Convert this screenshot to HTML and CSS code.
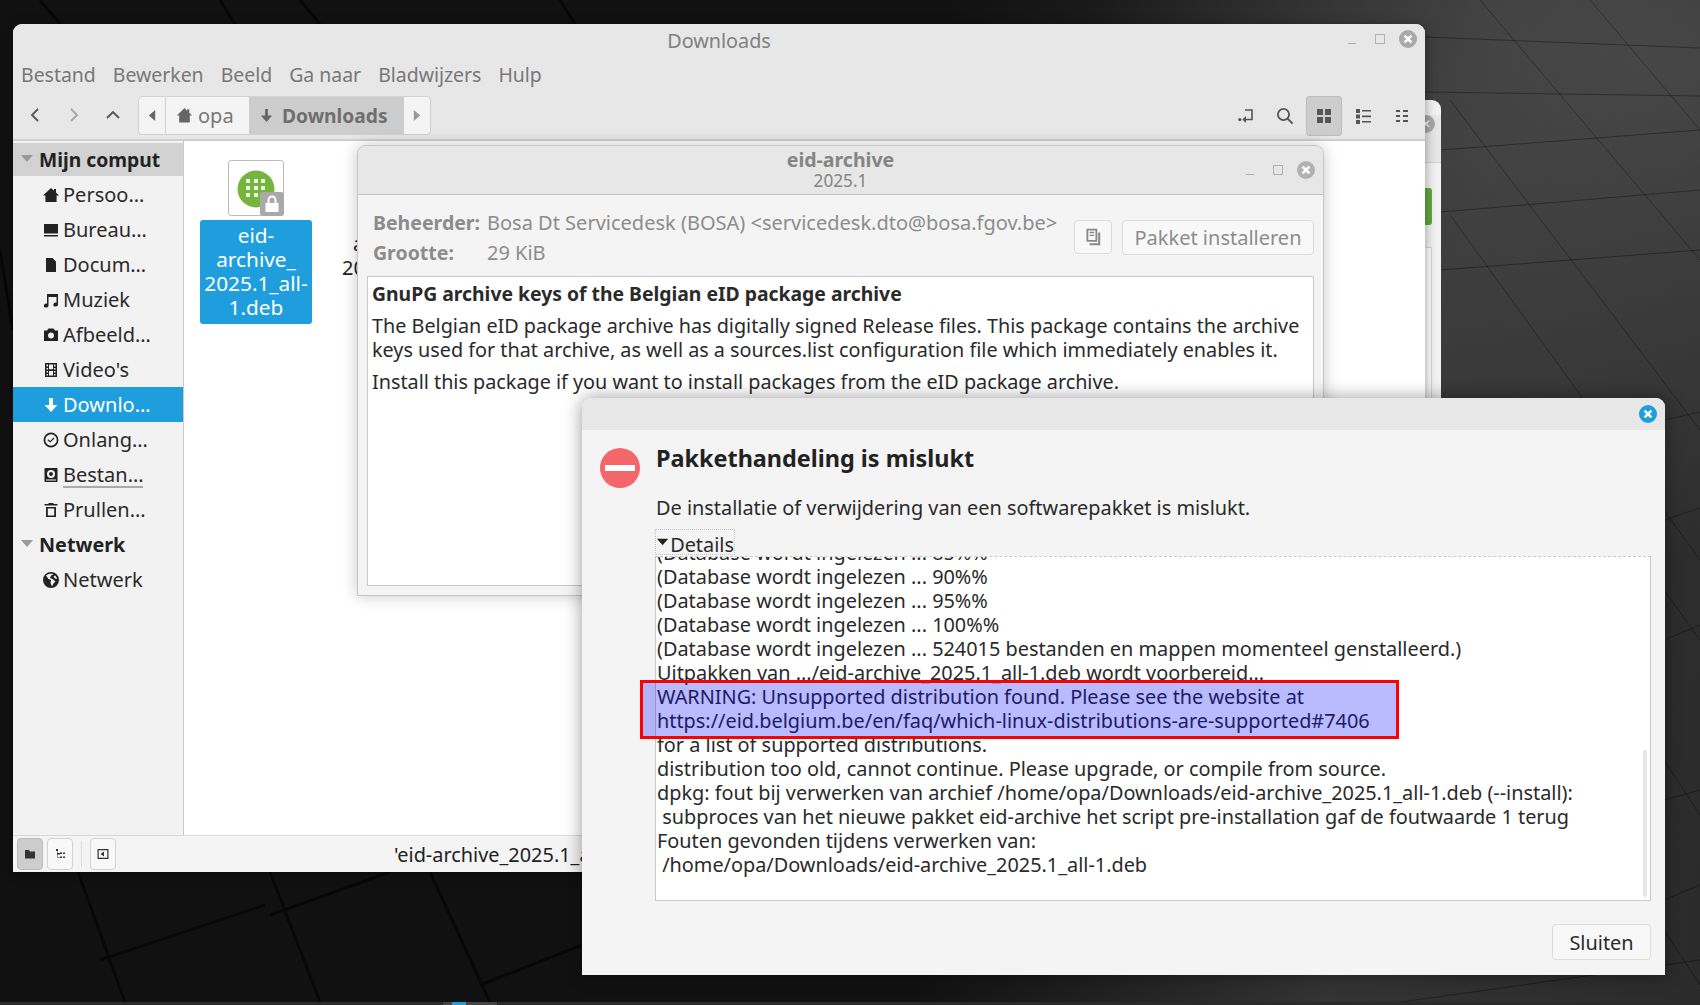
FILE: index.html
```html
<!DOCTYPE html>
<html lang="nl">
<head>
<meta charset="utf-8">
<title>Downloads</title>
<link rel="stylesheet" href="styles.css">
</head>
<body>
<div class="desktop">
  <svg class="wallpaper" viewBox="0 0 1700 1005" width="1700" height="1005">
    <g fill="none" stroke="#000" stroke-opacity=".35">
      <path d="M1425 37 1700 48M1425 92 1700 96M1441 150 1700 130M1441 212 1700 190M1441 270 1700 250M1664 420 1700 412M1664 520 1700 508M1664 640 1700 625M1664 800 1700 790M1664 900 1700 885M1380 1005 1700 960"/>
      <path d="M1480 0 1700 260M1590 0 1700 130M1450 100 1700 430M1450 215 1700 560M1664 590 1700 640M1664 760 1700 815M1664 930 1700 985"/>
    </g>
    <g fill="none" stroke="#000" stroke-opacity=".55" stroke-width="3">
      <path d="M40 0 60 24M220 0 235 24M300 0 320 24M560 0 575 24M0 250 13 330M78 872 125 1002M270 872 320 1002M430 872 490 1002M100 960 265 905M270 915 390 872M480 985 582 945"/>
    </g>
    <rect class="panel" x="0" y="1002" width="1700" height="3"/>
    <rect x="443" y="1002" width="54" height="3" fill="#444"/>
    <rect x="452" y="1002" width="14" height="3" fill="#1f9ede"/>
  </svg>

  <section class="window backwin">
    <div class="backtitle"><span class="backclose">✕</span></div>
    <div class="backbody"><span class="backgreen"></span><span class="backbox"></span></div>
  </section>

  <section class="window mainwin">
    <header class="titlebar">
      <span class="title">Downloads</span>
      <div class="winctl">
        <span class="ctl-min"></span><span class="ctl-max"></span>
        <span class="ctl-close"><svg viewBox="0 0 18 18" width="18" height="18"><circle cx="9" cy="9" r="9" fill="#a9a9a9"/><path d="M5.6 5.6 12.400 12.400M12.400 5.6 5.6 12.400" stroke="#fff" stroke-width="2.6"/></svg></span>
      </div>
    </header>
    <nav class="menubar">
      <span>Bestand</span><span>Bewerken</span><span>Beeld</span><span>Ga naar</span><span>Bladwijzers</span><span>Hulp</span>
    </nav>
    <div class="toolbar">
      <div class="navbtns">
        <svg viewBox="0 0 16 16" width="16" height="16" class="nav"><path d="M11 2 5 8l6 6" fill="none" stroke="#555" stroke-width="1.8"/></svg>
        <svg viewBox="0 0 16 16" width="16" height="16" class="nav"><path d="M5 2l6 6-6 6" fill="none" stroke="#a5a5a5" stroke-width="1.8"/></svg>
        <svg viewBox="0 0 16 16" width="16" height="16" class="nav"><path d="M2 11l6-6 6 6" fill="none" stroke="#555" stroke-width="1.8"/></svg>
      </div>
      <div class="pathbar">
        <span class="pb-arrow"><svg viewBox="0 0 10 14" width="8" height="13"><path d="M9 0v14L1 7z" fill="#666"/></svg></span>
        <span class="pb-item"><svg viewBox="0 0 16 16" width="17" height="17"><path d="M8 1 .8 8H3v6.500h10V8h2.200L12.500 5.400V2h-2v1.500z" fill="#666"/></svg>opa</span>
        <span class="pb-item pb-active"><svg viewBox="0 0 16 16" width="15" height="15"><path d="M6.500 1h3v7H14l-6 7-6-7h4.500z" fill="#666"/></svg>Downloads</span>
        <span class="pb-arrow pb-right"><svg viewBox="0 0 10 14" width="8" height="13"><path d="M1 0v14l8-7z" fill="#999"/></svg></span>
      </div>
      <div class="tools">
        <span class="tool"><svg viewBox="0 0 16 16" width="16" height="16"><path d="M7 2h7v9.500H5" fill="none" stroke="#555" stroke-width="1.6"/><path d="M8 8v7l-3.600-3.500z" fill="#555"/><circle cx="1.8" cy="11.6" r="1.6" fill="#555"/></svg></span>
        <span class="tool"><svg viewBox="0 0 18 18" width="18" height="18"><circle cx="7.5" cy="7.5" r="5.6" fill="none" stroke="#555" stroke-width="1.8"/><path d="M11.6 11.6 16.600 16.600" stroke="#555" stroke-width="2"/></svg></span>
        <span class="tool tool-on"><svg viewBox="0 0 16 16" width="16" height="16"><path d="M1 1h6v6H1zM9 1h6v6H9zM1 9h6v6H1zM9 9h6v6H9z" fill="#555"/></svg></span>
        <span class="tool"><svg viewBox="0 0 16 16" width="16" height="16"><path d="M1 1h4v4H1zM1 6.500h4v4H1zM1 12h4v4H1zM7 2h9v1.600H7zM7 7.600h9v1.600H7zM7 13h9v1.600H7z" fill="#555"/></svg></span>
        <span class="tool"><svg viewBox="0 0 16 16" width="16" height="16"><path d="M2 2h4v2H2zM9 2h5v2H9zM2 7h4v2H2zM9 7h5v2H9zM2 12h4v2H2zM9 12h5v2H9z" fill="#555"/></svg></span>
      </div>
    </div>
    <div class="mainbody">
      <aside class="sidebar">
        <div class="side-head"><svg class="tri" viewBox="0 0 12 7" width="12" height="7"><path d="M0 0h12L6 7z"/></svg>Mijn comput</div>
        <div class="side-row"><svg viewBox="0 0 16 16" width="16" height="16"><path d="M8 1 0 8.500h2.400V15h11.200V8.500H16L13 5.500V2h-2v1.700z"/></svg>Persoo…</div>
        <div class="side-row"><svg viewBox="0 0 16 16" width="16" height="16"><path d="M1 2h14v9.500H1zM1 13h14v1.500H1z"/></svg>Bureau…</div>
        <div class="side-row"><svg viewBox="0 0 16 16" width="16" height="16"><path d="M3 1h6.500L13 4.500V15H3z"/></svg>Docum…</div>
        <div class="side-row"><svg viewBox="0 0 16 16" width="16" height="16"><path d="M4 2h11v10.500a2.300 2 0 1 1-1.500-1.800V5H5.500v8.500A2.300 2 0 1 1 4 11.700z"/></svg>Muziek</div>
        <div class="side-row"><svg viewBox="0 0 16 16" width="16" height="16"><path fill-rule="evenodd" d="M1 3.500h3L5.500 1.500h5L12 3.500h3V14H1zM8 5.500a3 3 0 1 0 0 6 3 3 0 0 0 0-6z"/></svg>Afbeeld…</div>
        <div class="side-row"><svg viewBox="0 0 16 16" width="16" height="16"><path fill-rule="evenodd" d="M2 1h12v14H2zM3.500 2.500v2h1.500v-2zM3.500 6v1.500h1.500V6zM3.500 9v1.500h1.500V9zM3.500 12v1.500h1.500V12zM11 2.500v2h1.500v-2zM11 6v1.500h1.500V6zM11 9v1.500h1.500V9zM11 12v1.500h1.500V12zM6 2.500v4.800h4V2.500zM6 9v4.500h4V9z"/></svg>Video's</div>
        <div class="side-row side-sel"><svg viewBox="0 0 16 16" width="16" height="16"><path d="M6 1h4v7h4.500L8 15 1.500 8H6z"/></svg>Downlo…</div>
        <div class="side-row"><svg viewBox="0 0 16 16" width="16" height="16"><circle cx="8" cy="8" r="6.600" fill="none" stroke="#222" stroke-width="1.700"/><path d="M4.800 7.800 7.200 9.800 11 6" fill="none" stroke="#222" stroke-width="1.200"/></svg>Onlang…</div>
        <div class="side-row"><svg viewBox="0 0 16 16" width="16" height="16"><path fill-rule="evenodd" d="M2.500 1h11q1 0 1 1v12q0 1-1 1h-11q-1 0-1-1V2q0-1 1-1zM8 3a4 4 0 1 0 0 8 4 4 0 0 0 0-8zM8 5a2 2 0 1 1 0 4 2 2 0 0 1 0-4zM3 12.500V13.500H13v-1z"/></svg><span class="mounted">Bestan…</span></div>
        <div class="side-row"><svg viewBox="0 0 16 16" width="16" height="16"><path fill-rule="evenodd" d="M1.500 2h4V1h5v1h4v1.500h-13zM3 5h10v10H3zM4.800 6.600v6.800h6.400V6.600z"/></svg>Prullen…</div>
        <div class="side-head side-head-plain"><svg class="tri" viewBox="0 0 12 7" width="12" height="7"><path d="M0 0h12L6 7z"/></svg>Netwerk</div>
        <div class="side-row"><svg viewBox="0 0 16 16" width="16" height="16"><path fill-rule="evenodd" d="M8 0a8 8 0 1 1 0 16A8 8 0 0 1 8 0zM3 3.500l2.500 3.500L8 8l-.5 3 1.500 3.500 1.500-3 2-2-3-2.500L7 6 8 3.500 10.500 2.200C8 1.300 5 1.800 3 3.500zM12 3.500l-1.500 1L12 6.500l2 .5c-.2-1.400-1-2.600-2-3.500z"/></svg>Netwerk</div>
      </aside>
      <div class="files">
        <figure class="file">
          <div class="thumb">
            <svg viewBox="0 0 54 54" width="54" height="54">
              <circle cx="27" cy="28" r="18.500" fill="#75b53d"/>
              <g fill="#fff" fill-opacity=".88"><rect x="17" y="18" width="4" height="4"/><rect x="25" y="18" width="4" height="4"/><rect x="32" y="18" width="4" height="4"/><rect x="17" y="25" width="4" height="4"/><rect x="25" y="25" width="4" height="4"/><rect x="32" y="25" width="4" height="4"/><rect x="17" y="32" width="4" height="4"/><rect x="25" y="32" width="4" height="4"/></g>
            </svg>
            <span class="lock"><svg viewBox="0 0 24 24" width="24" height="24"><rect width="24" height="24" rx="3" fill="#a9a9a9"/><path d="M5.500 11h13v9h-13z" fill="#fff"/><path d="M8.500 11V8a3.500 3.500 0 0 1 7 0v3" fill="none" stroke="#fff" stroke-width="2"/></svg></span>
          </div>
          <figcaption class="fname">eid-<br>archive_<br>2025.1_all-<br>1.deb</figcaption>
        </figure>
        <div class="file2"><span class="f2a">archive</span><span>2025.1</span></div>
      </div>
    </div>
    <footer class="statusbar">
      <span class="sbtn sbtn-on"><svg viewBox="0 0 12 12" width="12" height="12"><path d="M1 2h4l1 1.500h5V10.500H1z" fill="#333"/></svg></span>
      <span class="sbtn"><svg viewBox="0 0 12 12" width="12" height="12"><path d="M2 1h2v2H3.500v2H6V4.500h2V6H6v.5H3.500V9H6v-.5h2V10H6v-.5H3V3H2zM9 4.500h2V6H9zM9 8.500h2V10H9z" fill="#333"/></svg></span>
      <span class="ssep"></span>
      <span class="sbtn"><svg viewBox="0 0 12 12" width="12" height="12"><path fill-rule="evenodd" d="M.5 1h11v10H.5zM1.700 2.200v7.600h8.600V2.200zM7 3.500v5L3.500 6z" fill="#333"/></svg></span>
      <span class="statustext">'eid-archive_2025.1_all-1.deb' geselecteerd (29,2 kB)</span>
    </footer>
  </section>

  <section class="window pkgwin">
    <header class="pkg-title">
      <div class="pkg-name"><strong>eid-archive</strong><span>2025.1</span></div>
      <div class="winctl winctl-pkg">
        <span class="ctl-min"></span><span class="ctl-max"></span>
        <span class="ctl-close"><svg viewBox="0 0 18 18" width="18" height="18"><circle cx="9" cy="9" r="9" fill="#b2b2b2"/><path d="M5.600 5.600 12.400 12.400M12.400 5.600 5.600 12.400" stroke="#fff" stroke-width="2.600"/></svg></span>
      </div>
    </header>
    <div class="pkg-body">
      <div class="pkg-meta">
        <div class="pkg-info">
          <div class="kv"><b>Beheerder:</b><span>Bosa Dt Servicedesk (BOSA) &lt;servicedesk.dto@bosa.fgov.be&gt;</span></div>
          <div class="kv"><b>Grootte:</b><span>29 KiB</span></div>
        </div>
        <span class="btn btn-icon"><svg viewBox="0 0 16 16" width="18" height="18"><path d="M3 1.500h8v10H3z" fill="none" stroke="#888" stroke-width="1.600"/><path d="M5 4h4M5 6.500h4" stroke="#888" stroke-width="1.200"/><path d="M13.500 4v10.500H5" fill="none" stroke="#888" stroke-width="1.800"/></svg></span>
        <span class="btn btn-install">Pakket installeren</span>
      </div>
      <div class="pkg-desc">
        <h2>GnuPG archive keys of the Belgian eID package archive</h2>
        <p>The Belgian eID package archive has digitally signed Release files. This package contains the archive<br>keys used for that archive, as well as a sources.list configuration file which immediately enables it.</p>
        <p>Install this package if you want to install packages from the eID package archive.</p>
      </div>
    </div>
  </section>

  <section class="window dialog">
    <header class="dlg-title">
      <svg viewBox="0 0 18 18" width="18" height="18"><circle cx="9" cy="9" r="9" fill="#1f9ede"/><path d="M5.600 5.600 12.400 12.400M12.400 5.600 5.600 12.400" stroke="#fff" stroke-width="2.600"/></svg>
    </header>
    <div class="dlg-body">
      <svg class="dlg-icon" viewBox="0 0 40 40" width="40" height="40"><circle cx="20" cy="20" r="20" fill="#f4666a"/><rect x="5" y="17" width="30" height="6" fill="#fff"/></svg>
      <div class="dlg-main">
        <h1>Pakkethandeling is mislukt</h1>
        <p class="dlg-sub">De installatie of verwijdering van een softwarepakket is mislukt.</p>
        <div class="expander"><svg viewBox="0 0 12 7" width="14" height="8"><path d="M0 0h12L6 7z" fill="#222"/></svg><span class="exp-label">Details</span></div>
        <div class="logview">
          <div class="log">
            <div>(Database wordt ingelezen ... 85%%</div>
            <div>(Database wordt ingelezen ... 90%%</div>
            <div>(Database wordt ingelezen ... 95%%</div>
            <div>(Database wordt ingelezen ... 100%%</div>
            <div>(Database wordt ingelezen ... 524015 bestanden en mappen momenteel genstalleerd.)</div>
            <div>Uitpakken van .../eid-archive_2025.1_all-1.deb wordt voorbereid...</div>
            <div>WARNING: Unsupported distribution found. Please see the website at</div>
            <div>https://eid.belgium.be/en/faq/which-linux-distributions-are-supported#7406</div>
            <div>for a list of supported distributions.</div>
            <div>distribution too old, cannot continue. Please upgrade, or compile from source.</div>
            <div>dpkg: fout bij verwerken van archief /home/opa/Downloads/eid-archive_2025.1_all-1.deb (--install):</div>
            <div>&nbsp;subproces van het nieuwe pakket eid-archive het script pre-installation gaf de foutwaarde 1 terug</div>
            <div>Fouten gevonden tijdens verwerken van:</div>
            <div>&nbsp;/home/opa/Downloads/eid-archive_2025.1_all-1.deb</div>
          </div>
          <span class="scroll"></span>
        </div>
        <div class="dlg-actions"><span class="btn btn-close">Sluiten</span></div>
      </div>
    </div>
    <div class="annot"></div>
  </section>
</div>
</body>
</html>
```

FILE: styles.css
```css
* { box-sizing: border-box; }
html, body { margin: 0; padding: 0; }
body { font-family: "Noto Sans", "Open Sans", sans-serif; font-size: 20px; color: #222; }
.desktop {
  position: relative; width: 1700px; height: 1005px; overflow: hidden;
  background:
    radial-gradient(700px 500px at 1640px 60px, rgba(90,90,90,.55), rgba(90,90,90,0)),
    linear-gradient(100deg, #111 0, #111 58%, #333 80%, #2b2b2b 100%);
}
.wallpaper { position: absolute; left: 0; top: 0; }
.panel { fill: #2a2a2a; }

.window { position: absolute; }
.mainwin {
  left: 13px; top: 24px; width: 1412px; height: 848px;
  background: #f2f2f2; border-radius: 9px 9px 0 0; overflow: hidden;
  display: flex; flex-direction: column;
  box-shadow: 0 2px 12px rgba(0,0,0,.4);
}
.titlebar { height: 36px; background: #e7e7e7; position: relative; display: flex; align-items: center; justify-content: center; flex: none; padding-bottom: 3px; }
.title { color: #808080; font-size: 19.800px; }
.winctl { position: absolute; right: 8px; top: 6px; display: flex; align-items: center; gap: 0; }
.winctl > span { width: 28px; height: 18px; display: flex; align-items: center; justify-content: center; }
.winctl > .ctl-close { width: 18px; margin-left: 5px; }
.ctl-min::before { content: ""; width: 8px; height: 1px; background: #b0b0b0; margin-top: 9px; }
.ctl-max::before { content: ""; width: 8px; height: 8px; border: 1px solid #b0b0b0; }
.menubar { height: 30px; background: #e7e7e7; display: flex; align-items: center; padding: 0 0 2px 8px; gap: 17px; color: #777; font-size: 19.450px; flex: none; }
.toolbar { height: 51px; background: #e7e7e7; border-bottom: 2px solid #cfcfcf; display: flex; align-items: flex-start; padding-top: 6px; flex: none; }
.navbtns { display: flex; width: 125px; padding: 11px 0 0 14px; gap: 23px; }
.nav { display: block; }
.pathbar { display: flex; height: 39px; border: 1px solid #d2d2d2; border-radius: 4px; background: #f4f4f4; overflow: hidden; color: #777; }
.pb-arrow { width: 27px; display: flex; align-items: center; justify-content: center; border-right: 1px solid #d2d2d2; }
.pb-right { width: 26px; border-right: 0; }
.pb-item { display: flex; align-items: center; gap: 5px; padding: 0 10px; width: 83px; white-space: nowrap; font-size: 20px; }
.pb-active { width: 155px; background: #cdcdcd; font-weight: 700; font-size: 19.200px; gap: 8px; color: #6e6e6e; }
.tools { margin-left: auto; display: flex; padding-right: 4px; }
.tool { width: 39px; height: 40px; display: flex; align-items: center; justify-content: center; }
.tool-on { background: #cdcdcd; border: 1px solid #bdbdbd; border-radius: 3px; width: 36px; margin: 0 1px 0 2px; }

.mainbody { flex: 1; display: flex; min-height: 0; }
.sidebar { width: 171px; background: #f2f2f2; border-right: 1px solid #c9c9c9; flex: none; display: flex; flex-direction: column; padding-top: 2px; white-space: nowrap; }
.side-head { height: 33px; background: #d2d2d2; display: flex; align-items: center; font-weight: 700; padding-left: 8px; font-size: 19.300px; color: #222; margin-bottom: 1px; }
.side-head-plain { background: none; height: 35px; margin: 0; font-size: 19.800px; }
.tri { fill: #9a9a9a; margin-right: 6px; margin-top: -2px; }
.side-row { height: 35px; display: flex; align-items: center; padding-left: 30px; gap: 4px; font-size: 20px; color: #2a2a2a; line-height: 1; }
.side-row svg { fill: #222; flex: none; }
.side-sel { background: #1f9ede; color: #fff; }
.side-sel svg { fill: #fff; }
.mounted { border-bottom: 2px solid #aaa; padding-bottom: 1px; margin-top: 4px; }
.files { flex: 1; background: #fff; position: relative; display: flex; padding: 19px 0 0 16px; gap: 30px; align-items: flex-start; }
.file { margin: 0; width: 112px; display: flex; flex-direction: column; align-items: center; gap: 4px; }
.thumb { width: 56px; height: 56px; background: #fff; border: 1px solid #bdbdbd; border-radius: 3px; position: relative; }
.thumb > svg { display: block; }
.lock { position: absolute; right: -1px; bottom: -1px; height: 24px; }
.lock svg { display: block; }
.fname { width: 112px; background: #1f9ede; color: #fff; text-align: center; line-height: 24px; padding: 3px 0 5px; border-radius: 3px; font-size: 20.800px; }
.file2 { display: flex; flex-direction: column; margin-top: 72px; line-height: 24px; color: #222; white-space: nowrap; }
.f2a { margin-left: 11px; }

.statusbar { height: 37px; background: #f4f4f4; border-top: 1px solid #d9d9d9; display: flex; align-items: center; padding: 0 4px; flex: none; position: relative; }
.sbtn { width: 26px; height: 32px; background: #f8f8f8; border: 1px solid #d2d2d2; border-radius: 4px; display: flex; align-items: center; justify-content: center; margin-right: 4px; }
.sbtn-on { background: #cdcdcd; border-color: #bcbcbc; }
.ssep { width: 1px; height: 26px; background: #ddd; margin: 0 8px 0 4px; }
.statustext { margin-left: 274px; white-space: nowrap; color: #222; font-size: 19.900px; }

.backwin { left: 1400px; top: 100px; width: 41px; height: 320px; background: #f2f2f2; border-radius: 0 9px 0 0; overflow: hidden; }
.backtitle { height: 48px; background: #e7e7e7; border-bottom: 1px solid #cfcfcf; position: relative; }
.backclose { display: block; width: 18px; height: 18px; border-radius: 50%; background: #a9a9a9; color: #fff; font-size: 12px; line-height: 18px; text-align: center; margin: 15px 0 0 17px; }
.backbody { position: relative; height: 270px; }
.backgreen { display: block; width: 32px; height: 37px; background: #62a83d; border-radius: 3px; margin-top: 25px; }
.backbox { display: block; width: 32px; height: 160px; border: 1px solid #d5d5d5; background: #fff; margin-top: 22px; }

.pkgwin { left: 357px; top: 145px; width: 967px; height: 451px; background: #f4f4f4; border: 1px solid #c6c6c6; border-radius: 9px 9px 0 0; box-shadow: 0 0 16px rgba(0,0,0,.22); display: flex; flex-direction: column; }
.pkg-title { height: 49px; background: #e7e7e7; border-bottom: 1px solid #c6c6c6; border-radius: 8px 8px 0 0; display: flex; align-items: center; justify-content: center; position: relative; flex: none; }
.pkg-name { display: flex; flex-direction: column; align-items: center; color: #858585; line-height: 1; padding-bottom: 2px; }
.pkg-name strong { font-size: 19.500px; line-height: 24px; }
.pkg-name span { font-size: 17.200px; line-height: 18px; }
.winctl-pkg { top: 15px; right: 8px; }
.pkg-body { flex: 1; display: flex; flex-direction: column; padding: 0 9px 9px 9px; min-height: 0; }
.pkg-meta { display: flex; height: 81px; align-items: flex-start; color: #8c8c8c; }
.pkg-info { padding: 12px 0 0 6px; flex: 1; white-space: nowrap; }
.kv { display: flex; height: 30px; align-items: center; font-size: 20px; }
.kv b { width: 114px; flex: none; font-size: 19.500px; }
.btn { background: #f8f8f8; border: 1px solid #dcdcdc; border-radius: 4px; display: flex; align-items: center; justify-content: center; white-space: nowrap; }
.btn-icon { width: 38px; height: 34px; margin: 25px 10px 0 0; }
.btn-install { width: 192px; height: 35px; margin-top: 25px; color: #8c8c8c; font-size: 20px; }
.pkg-desc { flex: 1; background: #fff; border: 1px solid #c9c9c9; padding: 4px 4px; color: #2a2a2a; font-size: 19.800px; line-height: 24px; white-space: nowrap; overflow: hidden; }
.pkg-desc h2 { margin: 0 0 7px; font-size: 19.350px; font-weight: 700; line-height: 26px; }
.pkg-desc p { margin: 0 0 8px; }

.dialog { left: 582px; top: 398px; width: 1083px; height: 577px; background: #f4f4f4; border-radius: 9px 9px 0 0; box-shadow: 0 0 18px rgba(0,0,0,.4); display: flex; flex-direction: column; }
.dlg-title { height: 32px; background: #e7e7e7; border-radius: 9px 9px 0 0; display: flex; align-items: center; justify-content: flex-end; padding-right: 8px; flex: none; }
.dlg-body { flex: 1; display: flex; min-height: 0; }
.dlg-icon { margin: 18px 0 0 18px; flex: none; }
.dlg-main { flex: 1; margin-left: 16px; padding-right: 14px; min-width: 0; display: flex; flex-direction: column; }
.dlg-main h1 { margin: 12px 0 0; font-size: 23.400px; line-height: 32px; font-weight: 700; color: #222; }
.dlg-sub { margin: 21px 0 0; line-height: 26px; color: #2a2a2a; font-size: 19.900px; }
.expander { margin-top: 9px; height: 24px; width: 78px; display: flex; align-items: center; gap: 2px; font-size: 19.900px; color: #2a2a2a; outline: 1px dotted #c4c4c4; padding-left: 1px; line-height: 1; }
.exp-label { padding-top: 5px; }
.logview { margin: 2px 0 0 -1px; height: 345px; flex: none; background: #fff; border: 1px solid #c9c9c9; border-top: 1px dashed #c9c9c9; position: relative; overflow: hidden; }
.log { margin-top: -16px; padding-left: 1px; line-height: 24px; font-size: 19.880px; color: #2a2a2a; white-space: nowrap; }
.scroll { position: absolute; right: 3px; top: 193px; bottom: 3px; width: 4px; background: #e6e6e6; border-radius: 2px; }
.dlg-actions { display: flex; justify-content: flex-end; padding-top: 23px; }
.btn-close { width: 99px; height: 36px; color: #2a2a2a; font-size: 19.900px; }
.annot { position: absolute; left: 58px; top: 282px; width: 759px; height: 59px; border: 3px solid #f00; background: rgba(0,0,255,.27); }
```
